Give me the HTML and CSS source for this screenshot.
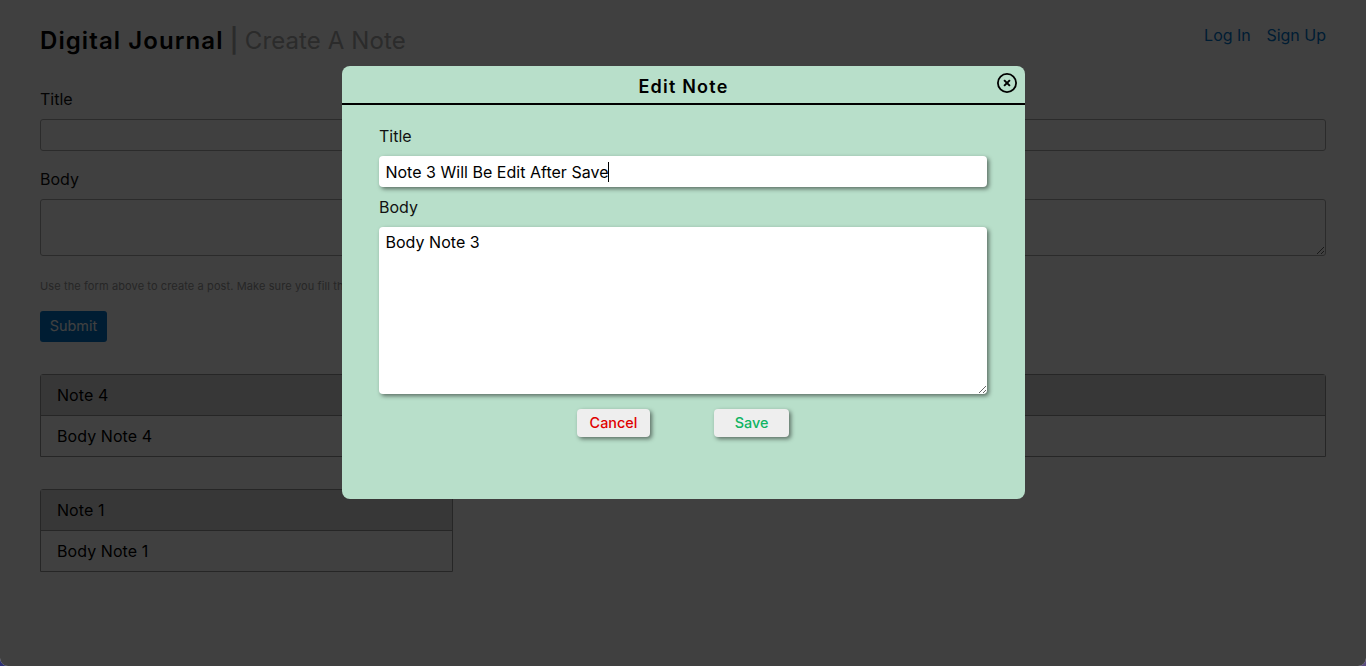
FILE: index.html
```html
<!DOCTYPE html>
<html lang="en">
<head>
<meta charset="utf-8">
<title>Digital Journal</title>
<link rel="stylesheet" href="styles.css">
</head>
<body>
<div class="page">
  <header class="header">
    <h1 class="brand">Digital Journal <span class="brand-sub"><span class="bar">|</span> Create A Note</span></h1>
    <nav class="nav"><a class="link">Log In</a><a class="link">Sign Up</a></nav>
  </header>
  <form class="create">
    <label class="label" for="title">Title</label>
    <input class="field" id="title">
    <label class="label label-body" for="body">Body</label>
    <textarea class="field area" id="body"></textarea>
    <p class="hint">Use the form above to create a post. Make sure you fill the required title and body fields!</p>
    <button class="submit" type="button">Submit</button>
  </form>
  <section class="notes">
    <article class="note"><h2 class="note-title">Note 4</h2><p class="note-body">Body Note 4</p></article>
    <article class="note"><h2 class="note-title">Note 3</h2><p class="note-body">Body Note 3</p></article>
    <article class="note"><h2 class="note-title"></h2><p class="note-body"></p></article>
    <article class="note"><h2 class="note-title">Note 1</h2><p class="note-body">Body Note 1</p></article>
  </section>
</div>
<div class="overlay">
  <div class="modal">
    <div class="modal-head">
      <h2 class="modal-title">Edit Note</h2>
      <svg class="close" viewBox="0 0 20 20" fill="none" stroke="#000"><circle cx="10" cy="10" r="9.1" stroke-width="1.8"/><path d="M7.1 7.1 12.9 12.9M12.9 7.1 7.1 12.9" stroke-width="2"/></svg>
    </div>
    <div class="modal-body">
      <label class="modal-label">Title</label>
      <div class="modal-input">Note 3 Will Be Edit After Save<span class="caret"></span></div>
      <label class="modal-label second">Body</label>
      <textarea class="modal-area">Body Note 3</textarea>
      <div class="actions"><button class="btn cancel" type="button">Cancel</button><button class="btn save" type="button">Save</button></div>
    </div>
  </div>
</div>
</body>
</html>
```
FILE: styles.css
```css
* { box-sizing: border-box; }
html { background: #30336b; }
body { margin: 0; height: 666px; overflow: hidden; background: linear-gradient(90deg, #2c3075, #5a4c80); font: 16px/24px Inter, sans-serif; color: #111; }
h1, h2, p { margin: 0; font-weight: 400; }
.page { height: 666px; padding: 24px 40px 0; background: #fff; border-radius: 0 0 8px 8px; }
.header { display: flex; justify-content: space-between; height: 64px; }
.brand { font-size: 24px; line-height: 34px; font-weight: 600; letter-spacing: 1.08px; color: #000; }
.brand-sub { font-weight: 400; color: #aaa; letter-spacing: 0.1px; }
.bar { font-weight: 600; margin-left: -1px; margin-right: -.4px; }
.nav { display: flex; gap: 15.6px; line-height: 22px; }
.link { color: #0074cc; }
.create { display: flex; flex-direction: column; align-items: flex-start; }
.label { line-height: 22px; margin-bottom: 9px; }
.label-body { margin-top: 17px; }
.field { width: 100%; height: 32px; border: 1px solid #aaa; border-radius: 3px; background: #fff; padding: 4px 6px; display: block; }
.area { height: 57px; }
.hint { margin-top: 20px; font-size: 11px; line-height: 21px; height: 20px; color: #999; letter-spacing: .11px; }
.submit { margin-top: 15px; width: 67px; height: 31px; border: 0; border-radius: 3px; padding: 0 0 2px; background: #0074cc; color: #fff; font: 14.4px/28px Inter, sans-serif; }
.notes { margin-top: 32px; display: grid; grid-template-columns: repeat(3, 1fr); gap: 32px 24px; }
.note { height: 83px; border: 1px solid #999; border-radius: 3px 3px 0 0; font-size: 16px; }
.note-title { height: 41px; padding: 0 16px; font-size: 16px; line-height: 40px; background: #dcdcdc; border-bottom: 1px solid #999; color: #000; letter-spacing: .07px; }
.note-body { padding: 0 16px; line-height: 40px; color: #000; letter-spacing: .07px; }
.overlay { position: absolute; inset: 0; height: 666px; display: flex; justify-content: center; align-items: flex-start; padding: 66px 0 0 1px; background: rgba(0, 0, 0, .75); border-radius: 0 0 8px 8px; }
.modal { width: 683px; height: 433px; border-radius: 8px; background: #b8dfca; }
.modal-head { position: relative; height: 39px; border-bottom: 2px solid #000; text-align: center; }
.modal-title { font-size: 18px; line-height: 42px; font-weight: 600; letter-spacing: 1.2px; color: #000; }
.close { position: absolute; top: 7px; right: 8px; width: 20px; height: 20px; }
.modal-body { padding: 20px 38px 0 37px; display: flex; flex-direction: column; }
.modal-label { line-height: 22px; margin-bottom: 9px; }
.second { margin-top: 9px; }
.modal-input { display: flex; align-items: center; height: 31px; padding: 1px 6.4px 0; border-radius: 4px; background: #fff; box-shadow: 2px 2px 4px rgba(0, 0, 0, .5); color: #000; letter-spacing: .02px; }
.caret { width: 1px; height: 20px; margin-left: -1px; background: #000; }
.modal-area { display: block; height: 167px; border: 0; border-radius: 4px; padding: 4px 6.4px; background: #fff; box-shadow: 2px 2px 4px rgba(0, 0, 0, .5); font: 16px/22px Inter, sans-serif; color: #000; letter-spacing: .05px; }
.actions { display: flex; justify-content: center; gap: 64px; margin-top: 15px; }
.btn { height: 28px; padding: 0; border: 0; border-radius: 4px; background: #eee; box-shadow: 2px 2px 4px rgba(0, 0, 0, .5); font: 500 14.4px/28px Inter, sans-serif; }
.cancel { width: 73px; color: #e00000; }
.save { width: 75px; color: #10b463; }
```
